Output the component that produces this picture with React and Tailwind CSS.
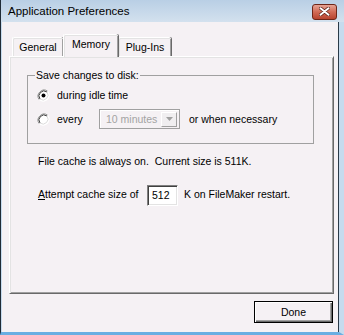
import React from 'react';

const Radio = ({ checked }) => (
  <svg width="13" height="13" viewBox="0 0 13 13" className="shrink-0">
    <circle cx="6.5" cy="6.5" r="6" fill="#ffffff" />
    <path d="M2.3 10.7 A6 6 0 0 1 10.7 2.3" fill="none" stroke="#8a8a8a" strokeWidth="1" />
    <path d="M3 10 A5 5 0 0 1 10 3" fill="none" stroke="#404040" strokeWidth="1" />
    <path d="M10.7 2.3 A6 6 0 0 1 2.3 10.7" fill="none" stroke="#ffffff" strokeWidth="1" />
    <path d="M10 3 A5 5 0 0 1 3 10" fill="none" stroke="#dcdcdc" strokeWidth="1" />
    {checked && <circle cx="6.5" cy="6.5" r="2" fill="#000000" />}
  </svg>
);

const Tab = ({ label, selected, width }) => (
  <div
    className={
      selected
        ? 'relative z-10 -mb-px h-[23px] flex items-start justify-center pt-[3px] bg-[#f5f1f4] border-l border-t border-[#ffffff] shadow-[inset_1px_1px_0_#e3e3e3,inset_-1px_0_0_#a0a0a0,1px_0_0_#696969] rounded-t-[2px]'
        : 'h-[19px] flex items-start justify-center pt-[3px] bg-[#f5f1f4] border-l border-t border-[#ffffff] shadow-[inset_1px_1px_0_#e3e3e3,inset_-1px_0_0_#a0a0a0,1px_0_0_#696969] rounded-t-[2px]'
    }
    style={{ width }}
  >
    <span className="text-[10.5px] leading-[13px]">{label}</span>
  </div>
);

export default function App() {
  return (
    <div className="w-[344px] h-[335px] flex flex-col bg-[#c6dbee] font-['Liberation_Sans',Arial,sans-serif] text-black overflow-hidden">
      {/* Title bar */}
      <div className="h-[22px] shrink-0 flex items-center justify-between pl-[7px] pr-[7px] bg-gradient-to-b from-[#b9cfe5] to-[#d3e1ee] border-l border-[#1f2b36]">
        <span className="text-[11.5px] leading-none mt-[1px]">Application Preferences</span>
        <div className="w-[25px] h-[16px] mt-[1px] rounded-[3px] border border-[#6e2618] bg-gradient-to-b from-[#e6a394] via-[#d16a55] to-[#b8432e] flex items-center justify-center">
          <svg width="11" height="9" viewBox="0 0 11 9">
            <path d="M1.5 1.2 L9.5 7.8 M9.5 1.2 L1.5 7.8" stroke="#5a1e14" strokeWidth="3.4" strokeLinecap="round" />
            <path d="M1.5 1.2 L9.5 7.8 M9.5 1.2 L1.5 7.8" stroke="#ffffff" strokeWidth="2" strokeLinecap="round" />
          </svg>
        </div>
      </div>

      {/* Window body */}
      <div className="flex-1 flex border-l border-[#1f2b36] border-b-[3px] border-b-[#6aaee2] border-r-[5px] border-r-[#c6dbee]">
        <div className="flex-1 flex flex-col bg-[#f5f1f4] pl-[7px] pr-[4px] pt-[12px] ml-px border-r border-[#2a3a48]">
          {/* Tabs */}
          <div className="h-[22px] flex items-end pl-[3px]">
            <Tab label="General" width={51} />
            <Tab label="Memory" width={55} selected />
            <Tab label="Plug-Ins" width={53} />
          </div>

          {/* Tab panel */}
          <div className="h-[238px] flex flex-col bg-[#f5f1f4] border-l border-t border-[#ffffff] border-r border-b border-r-[#696969] border-b-[#696969] shadow-[inset_1px_1px_0_#e3e3e3,inset_-1px_-1px_0_#a0a0a0]">
            <fieldset className="ml-[17px] mt-[12px] w-[287px] border border-[#a0a0a0] pl-[9px] pb-[14px]">
              <legend className="-ml-[2px] px-[1px] text-[10.5px] leading-[13px]">Save changes to disk:</legend>
              <div className="mt-[5px] h-[16px] flex items-center gap-[7px]">
                <Radio checked />
                <span className="text-[10.5px] leading-[13px]">during idle time</span>
              </div>
              <div className="mt-[6px] h-[20px] flex items-center">
                <Radio />
                <span className="ml-[7px] w-[42px] text-[10.5px] leading-[13px]">every</span>
                <div className="w-[81px] h-[20px] flex items-center justify-between border border-[#a0a0a0] shadow-[inset_1px_1px_0_#ffffff] pl-[6px] pr-[2px]">
                  <span className="text-[10.5px] leading-[13px] text-[#a3a3a3]">10 minutes</span>
                  <div className="w-[16px] h-[15px] flex items-center justify-center bg-[#f0eef0] border-l border-t border-[#ffffff] border-r border-b border-r-[#a0a0a0] border-b-[#a0a0a0]">
                    <svg width="7" height="4" viewBox="0 0 7 4">
                      <path d="M0 0 H7 L3.5 4 Z" fill="#a0a0a0" />
                    </svg>
                  </div>
                </div>
                <span className="ml-[9px] text-[10.5px] leading-[13px]">or when necessary</span>
              </div>
            </fieldset>

            <p className="ml-[28px] mt-[11px] text-[10.5px] leading-[13px] whitespace-pre">File cache is always on.  Current size is 511K.</p>

            <div className="ml-[28px] mt-[17px] h-[21px] flex items-center">
              <span className="w-[109px] text-[10.5px] leading-[13px] -mt-[3px]">
                <span className="underline">A</span>ttempt cache size of
              </span>
              <div className="w-[31px] h-[21px] flex items-center bg-white border-l border-t border-[#808080] border-r border-b border-r-[#ffffff] border-b-[#ffffff] shadow-[inset_1px_1px_0_#404040,inset_-1px_-1px_0_#e3e3e3] pl-[4px]">
                <span className="text-[10.5px] leading-[13px]">512</span>
              </div>
              <span className="ml-[6px] text-[10.5px] leading-[13px] -mt-[3px]">K on FileMaker restart.</span>
            </div>
          </div>

          {/* Footer */}
          <div className="mt-[7px] flex justify-end pr-[1px]">
            <button className="w-[79px] h-[22px] flex items-center justify-center bg-[#f5f1f4] border border-[#000000] shadow-[inset_1px_1px_0_#ffffff,inset_-1px_-1px_0_#696969,inset_-2px_-2px_0_#a0a0a0]">
              <span className="text-[10.5px] leading-[13px]">Done</span>
            </button>
          </div>
        </div>
      </div>
    </div>
  );
}
